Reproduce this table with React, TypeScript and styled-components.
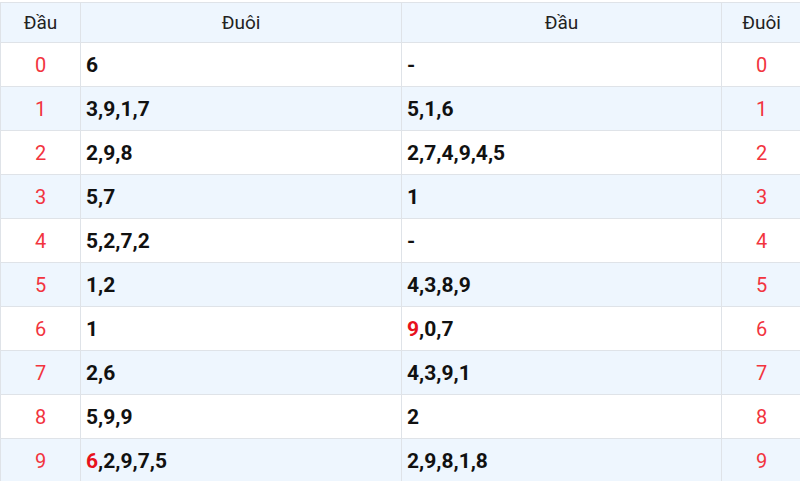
import React from 'react'
import styled, { createGlobalStyle } from 'styled-components'

const GlobalStyle = createGlobalStyle`
  body {
    margin: 0;
    background: #ffffff;
    font-family: Roboto, "Liberation Sans", sans-serif;
  }
`

const Table = styled.table`
  width: 800px;
  border-collapse: collapse;
  margin-top: 2px;
  table-layout: fixed;
`

const HeadCell = styled.th<{ w: number }>`
  width: ${({ w }) => w}px;
  height: 39px;
  background: #eef6fe;
  border: 1px solid #dfe3e8;
  font-weight: 400;
  font-size: 19px;
  color: #222;
  text-align: center;
  padding: 0;
`

const Row = styled.tr<{ striped: boolean }>`
  background: ${({ striped }) => (striped ? '#eef6fe' : '#ffffff')};
`

const NumCell = styled.td`
  height: 43px;
  border: 1px solid #dfe3e8;
  text-align: center;
  color: #f2343e;
  font-size: 20px;
  padding: 0;
`

const ValueCell = styled.td`
  height: 43px;
  border: 1px solid #dfe3e8;
  padding: 0 0 0 5px;
  font-size: 21px;
  font-weight: 700;
  color: #111;
`

const Hot = styled.span`
  color: #e8121c;
`

type Entry = { tail: string; head: string }

const rows: Entry[] = [
  { tail: '6', head: '-' },
  { tail: '3,9,1,7', head: '5,1,6' },
  { tail: '2,9,8', head: '2,7,4,9,4,5' },
  { tail: '5,7', head: '1' },
  { tail: '5,2,7,2', head: '-' },
  { tail: '1,2', head: '4,3,8,9' },
  { tail: '1', head: '*9,0,7' },
  { tail: '2,6', head: '4,3,9,1' },
  { tail: '5,9,9', head: '2' },
  { tail: '*6,2,9,7,5', head: '2,9,8,1,8' },
]

// a leading * marks the first number as highlighted
function Values({ text }: { text: string }) {
  if (!text.startsWith('*')) return <>{text}</>
  const [first, ...rest] = text.slice(1).split(',')
  return (
    <>
      <Hot>{first}</Hot>
      {rest.length > 0 ? ',' + rest.join(',') : ''}
    </>
  )
}

export default function App() {
  return (
    <>
      <GlobalStyle />
      <Table>
        <thead>
          <tr>
            <HeadCell w={79}>Đầu</HeadCell>
            <HeadCell w={320}>Đuôi</HeadCell>
            <HeadCell w={319}>Đầu</HeadCell>
            <HeadCell w={79}>Đuôi</HeadCell>
          </tr>
        </thead>
        <tbody>
          {rows.map((r, i) => (
            <Row key={i} striped={i % 2 === 1}>
              <NumCell>{i}</NumCell>
              <ValueCell>
                <Values text={r.tail} />
              </ValueCell>
              <ValueCell>
                <Values text={r.head} />
              </ValueCell>
              <NumCell>{i}</NumCell>
            </Row>
          ))}
        </tbody>
      </Table>
    </>
  )
}
